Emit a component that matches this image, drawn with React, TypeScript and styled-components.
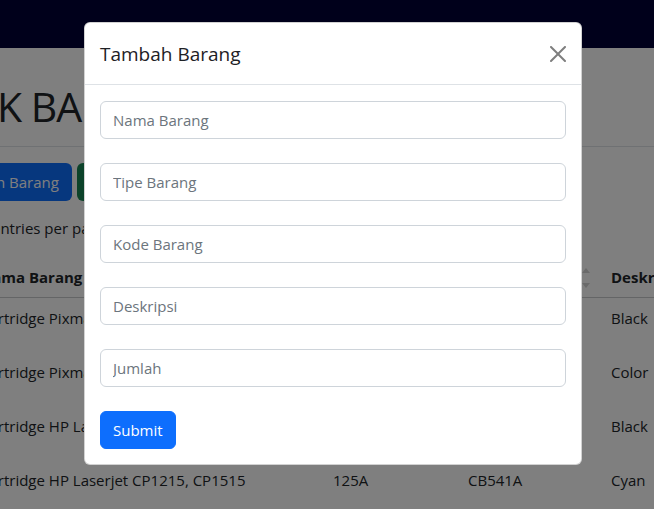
import React from "react";
import styled, { createGlobalStyle } from "styled-components";

const Global = createGlobalStyle`
  html, body { margin: 0; padding: 0; }
  body {
    font-family: "Open Sans", "Noto Sans", sans-serif;
    font-size: 15px;
    line-height: 24px;
    color: #212529;
    background: #fff;
    width: 654px;
    height: 509px;
    overflow: hidden;
  }
  * { box-sizing: border-box; }
`;

const Page = styled.div`
  position: relative;
  width: 654px;
  height: 509px;
  overflow: hidden;
`;

const Navbar = styled.nav`
  height: 48px;
  background: #000036;
`;

const Main = styled.main`
  display: flex;
  flex-direction: column;
`;

const TitleBlock = styled.div`
  padding: 33px 0 15px;
  border-bottom: 1px solid #dee2e6;
`;

const Title = styled.h1<{ $shift: number }>`
  margin: 0 0 0 ${(p) => p.$shift}px;
  font-size: 41px;
  font-weight: 500;
  line-height: 50px;
  letter-spacing: -1px;
  white-space: nowrap;
`;

const ButtonRow = styled.div<{ $shift: number }>`
  display: flex;
  gap: 5px;
  margin: 16px 0 0 ${(p) => p.$shift}px;
`;

const Button = styled.button<{ $variant: "primary" | "success" }>`
  height: 38px;
  padding: 0 12px;
  border: 1px solid transparent;
  border-radius: 6px;
  font-family: inherit;
  font-size: 15px;
  color: #fff;
  white-space: nowrap;
  background: ${(p) => (p.$variant === "primary" ? "#0d6efd" : "#198754")};
`;

const Entries = styled.div<{ $shift: number }>`
  display: flex;
  align-items: center;
  gap: 8px;
  margin: 8px 0 0 ${(p) => p.$shift}px;
  white-space: nowrap;
`;

const Select = styled.div`
  width: 60px;
  height: 38px;
  border: 1px solid #dee2e6;
  border-radius: 6px;
`;

const Table = styled.table<{ $shift: number }>`
  margin: 10px 0 0 ${(p) => p.$shift}px;
  border-collapse: collapse;
  table-layout: fixed;
  width: 800px;
`;

const Th = styled.th<{ $w: number }>`
  width: ${(p) => p.$w}px;
  text-align: left;
  font-weight: 700;
  padding: 8px;
  height: 40px;
  border-bottom: 1px solid #c9cbcd;
  white-space: nowrap;
  position: relative;
`;

const Td = styled.td`
  padding: 8px;
  height: 54px;
  vertical-align: top;
  white-space: nowrap;
  overflow: hidden;
`;

const SortIcon = styled.span`
  position: absolute;
  right: 13px;
  top: 11px;
  display: flex;
  flex-direction: column;
  gap: 10px;
  &::before, &::after {
    content: "";
    display: block;
    border-left: 4px solid transparent;
    border-right: 4px solid transparent;
  }
  &::before { border-bottom: 5px solid #d4d4d4; }
  &::after { border-top: 5px solid #d4d4d4; }
`;

const Backdrop = styled.div`
  position: absolute;
  inset: 0;
  background: rgba(0, 0, 0, 0.5);
`;

const Modal = styled.div`
  position: absolute;
  left: 84px;
  top: 22px;
  width: 498px;
  background: #fff;
  border: 1px solid rgba(0, 0, 0, 0.175);
  border-radius: 6px;
  display: flex;
  flex-direction: column;
`;

const ModalHeader = styled.div`
  display: flex;
  align-items: center;
  justify-content: space-between;
  padding: 16px 15px 15px;
  border-bottom: 1px solid #dee2e6;
`;

const ModalTitle = styled.h5`
  margin: 0;
  font-size: 19px;
  font-weight: 500;
  line-height: 30px;
  color: #1e2125;
`;

const CloseButton = styled.button`
  width: 16px;
  height: 16px;
  padding: 0;
  border: 0;
  background: transparent;
  display: flex;
  opacity: 0.5;
`;

const Form = styled.form`
  display: flex;
  flex-direction: column;
  gap: 24px;
  padding: 16px 15px 15px;
`;

const Input = styled.input`
  display: block;
  width: 100%;
  height: 38px;
  padding: 6px 12px;
  border: 1px solid #ced4da;
  border-radius: 6px;
  font-family: inherit;
  font-size: 15px;
  color: #212529;
  &::placeholder { color: #6c757d; }
`;

const SubmitButton = styled.button`
  align-self: flex-start;
  height: 38px;
  padding: 0 12px;
  border: 1px solid #0d6efd;
  border-radius: 6px;
  background: #0d6efd;
  color: #fff;
  font-family: inherit;
  font-size: 15px;
`;

const rows = [
  ["Cartridge Pixma", "", "", "Black"],
  ["Cartridge Pixma", "", "", "Color"],
  ["Cartridge HP Laserjet", "", "", "Black"],
  ["Cartridge HP Laserjet CP1215, CP1515", "125A", "CB541A", "Cyan"],
];

const fields = ["Nama Barang", "Tipe Barang", "Kode Barang", "Deskripsi", "Jumlah"];

export default function App() {
  return (
    <>
      <Global />
      <Page>
        <Navbar />
        <Main>
          <TitleBlock>
            <Title $shift={-77}>STOK BARANG</Title>
          </TitleBlock>
          <ButtonRow $shift={-65}>
            <Button $variant="primary">Tambah Barang</Button>
            <Button $variant="success">Export</Button>
          </ButtonRow>
          <Entries $shift={-76}>
            <Select />
            <span>entries per page</span>
          </Entries>
          <Table $shift={-28}>
            <thead>
              <tr>
                <Th $w={353}>Nama Barang</Th>
                <Th $w={135}>Tipe</Th>
                <Th $w={143}>
                  Kode
                  <SortIcon />
                </Th>
                <Th $w={172}>Deskripsi</Th>
              </tr>
            </thead>
            <tbody>
              {rows.map((r, i) => (
                <tr key={i}>
                  {r.map((c, j) => (
                    <Td key={j}>{c}</Td>
                  ))}
                </tr>
              ))}
            </tbody>
          </Table>
        </Main>
        <Backdrop />
        <Modal>
          <ModalHeader>
            <ModalTitle>Tambah Barang</ModalTitle>
            <CloseButton aria-label="Close">
              <svg width="16" height="16" viewBox="0 0 16 16">
                <path
                  fill="#000"
                  d="M.293.293a1 1 0 0 1 1.414 0L8 6.586 14.293.293a1 1 0 1 1 1.414 1.414L9.414 8l6.293 6.293a1 1 0 0 1-1.414 1.414L8 9.414l-6.293 6.293a1 1 0 0 1-1.414-1.414L6.586 8 .293 1.707a1 1 0 0 1 0-1.414z"
                />
              </svg>
            </CloseButton>
          </ModalHeader>
          <Form>
            {fields.map((f) => (
              <Input key={f} placeholder={f} />
            ))}
            <SubmitButton type="button">Submit</SubmitButton>
          </Form>
        </Modal>
      </Page>
    </>
  );
}
